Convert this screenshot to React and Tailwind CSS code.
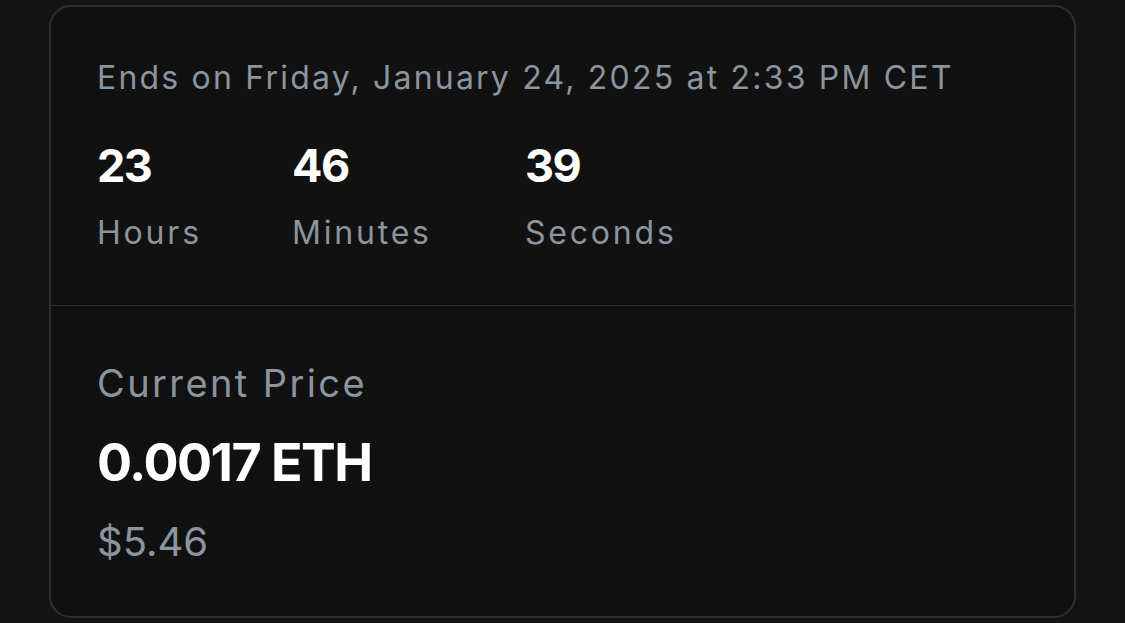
import React from 'react';

const countdown = [
  { value: '23', label: 'Hours' },
  { value: '46', label: 'Minutes' },
  { value: '39', label: 'Seconds' },
];

export default function App() {
  return (
    <div className="min-h-screen w-full bg-[#141414] pl-[49px] pt-[5px]" style={{ fontFamily: 'Inter, "Noto Sans", sans-serif' }}>
      <div className="w-[1027px] h-[613px] rounded-[22px] border-2 border-[#2b3036] bg-[#111111] overflow-hidden">
        {/* countdown section */}
        <div className="h-[299px] border-b border-[#2c2c2e] pl-[46px] pt-[55px]">
          <p className="text-[32px] leading-[32px] tracking-[2.2px] text-[#8b959f]">
            Ends on Friday, January 24, 2025 at 2:33 PM CET
          </p>
          <div className="mt-[49px] grid grid-cols-[195px_233px_auto]">
            {countdown.map((c) => (
              <div key={c.label} className="flex flex-col">
                <span className="text-[45px] leading-[46px] font-bold tracking-[-1.5px] text-white">{c.value}</span>
                <span className="mt-[28px] text-[32px] leading-[32px] tracking-[2.8px] text-[#8b959f]">{c.label}</span>
              </div>
            ))}
          </div>
        </div>

        {/* price section */}
        <div className="pl-[46px] pt-[58px]">
          <p className="text-[38px] leading-[38px] tracking-[2.4px] text-[#8b959f]">Current Price</p>
          <p className="mt-[34px] text-[52px] leading-[53px] font-bold tracking-[-1.5px] text-white">0.0017 ETH</p>
          <p className="mt-[33px] text-[40px] leading-[40px] text-[#8b959f]">$5.46</p>
        </div>
      </div>
    </div>
  );
}
